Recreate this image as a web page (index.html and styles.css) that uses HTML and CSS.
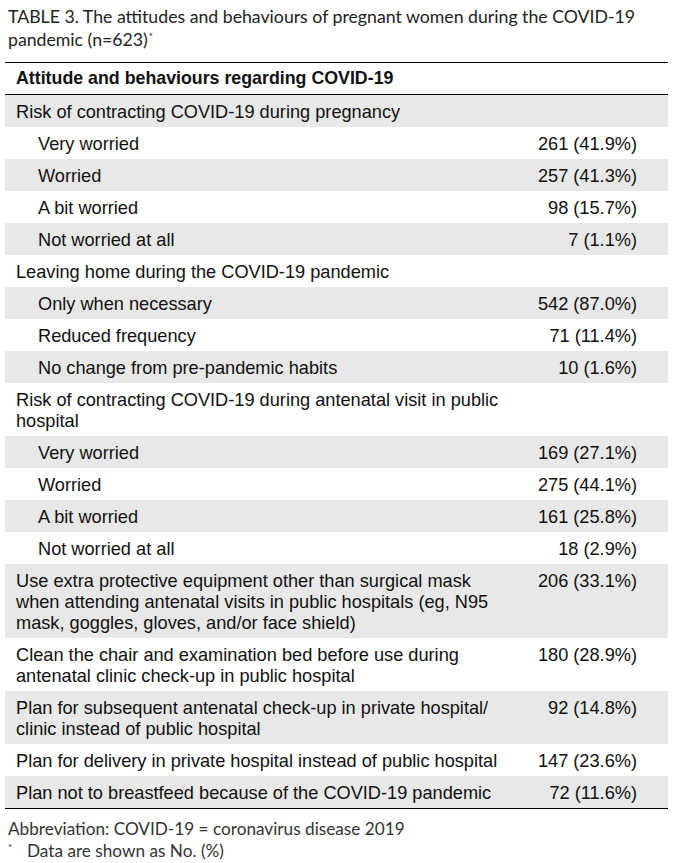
FILE: index.html
```html
<!DOCTYPE html>
<html>
<head>
<meta charset="utf-8">
<link rel="stylesheet" href="styles.css">
</head>
<body>
<div class="caption">TABLE 3. The attitudes and behaviours of pregnant women during the COVID-19 pandemic (n=623)<sup class="cap-mark">*</sup></div>
<table class="data">
  <thead>
    <tr><th colspan="2">Attitude and behaviours regarding COVID-19</th></tr>
  </thead>
  <tbody>
    <tr><td class="label">Risk of contracting COVID-19 during pregnancy</td><td class="num"></td></tr>
    <tr><td class="label sub">Very worried</td><td class="num">261 (41.9%)</td></tr>
    <tr><td class="label sub">Worried</td><td class="num">257 (41.3%)</td></tr>
    <tr><td class="label sub">A bit worried</td><td class="num">98 (15.7%)</td></tr>
    <tr><td class="label sub">Not worried at all</td><td class="num">7 (1.1%)</td></tr>
    <tr><td class="label">Leaving home during the COVID-19 pandemic</td><td class="num"></td></tr>
    <tr><td class="label sub">Only when necessary</td><td class="num">542 (87.0%)</td></tr>
    <tr><td class="label sub">Reduced frequency</td><td class="num">71 (11.4%)</td></tr>
    <tr><td class="label sub">No change from pre-pandemic habits</td><td class="num">10 (1.6%)</td></tr>
    <tr><td class="label">Risk of contracting COVID-19 during antenatal visit in public hospital</td><td class="num"></td></tr>
    <tr><td class="label sub">Very worried</td><td class="num">169 (27.1%)</td></tr>
    <tr><td class="label sub">Worried</td><td class="num">275 (44.1%)</td></tr>
    <tr><td class="label sub">A bit worried</td><td class="num">161 (25.8%)</td></tr>
    <tr><td class="label sub">Not worried at all</td><td class="num">18 (2.9%)</td></tr>
    <tr><td class="label">Use extra protective equipment other than surgical mask when attending antenatal visits in public hospitals (eg, N95 mask, goggles, gloves, and/or face shield)</td><td class="num">206 (33.1%)</td></tr>
    <tr><td class="label">Clean the chair and examination bed before use during antenatal clinic check-up in public hospital</td><td class="num">180 (28.9%)</td></tr>
    <tr><td class="label">Plan for subsequent antenatal check-up in private hospital/ clinic instead of public hospital</td><td class="num">92 (14.8%)</td></tr>
    <tr><td class="label">Plan for delivery in private hospital instead of public hospital</td><td class="num">147 (23.6%)</td></tr>
    <tr><td class="label">Plan not to breastfeed because of the COVID-19 pandemic</td><td class="num">72 (11.6%)</td></tr>
  </tbody>
</table>
<div class="notes">
  <p class="note">Abbreviation: COVID-19 = coronavirus disease 2019</p>
  <p class="note star"><span class="mark">*</span>Data are shown as No. (%)</p>
</div>
</body>
</html>
```
FILE: styles.css
```css
html, body {
  margin: 0;
  padding: 0;
  background: #fff;
}
body {
  width: 675px;
}
.caption {
  font-family: Lato, "Open Sans", sans-serif;
  font-size: 17.7px;
  line-height: 23px;
  color: #222;
  padding: 5px 8px 0 8px;
  box-sizing: border-box;
  height: 62px;
}
.cap-mark {
  font-size: 10px;
  line-height: 0;
  vertical-align: 6px;
  margin-left: 1px;
}
.data {
  margin-left: 5px;
  width: 663px;
  border-collapse: collapse;
  font-family: "Liberation Sans", Arial, sans-serif;
  font-size: 18.2px;
  line-height: 21px;
  color: #111;
}
.data th {
  text-align: left;
  font-weight: bold;
  font-size: 17.8px;
  padding: 5px 11px 5px;
  border-top: 1px solid #000;
  border-bottom: 1px solid #000;
}
.data tbody tr:nth-child(odd) {
  background: #e8e8e8;
}
.data td {
  vertical-align: top;
  padding: 7px 0 4px;
}
.data td.label {
  padding-left: 11px;
  padding-right: 12px;
}
.data td.label.sub {
  padding-left: 33px;
}
.data td.num {
  width: 109px;
  padding-right: 31px;
  text-align: right;
  white-space: nowrap;
}
.data tbody tr:last-child td {
  border-bottom: 1px solid #000;
}
.notes {
  font-family: Lato, "Open Sans", sans-serif;
  font-size: 17.2px;
  line-height: 22px;
  color: #333;
  padding: 9px 8px 0;
}
.note {
  margin: 0;
}
.star {
  display: flex;
}
.mark {
  width: 19px;
  font-size: 10px;
  line-height: 14px;
}
```
